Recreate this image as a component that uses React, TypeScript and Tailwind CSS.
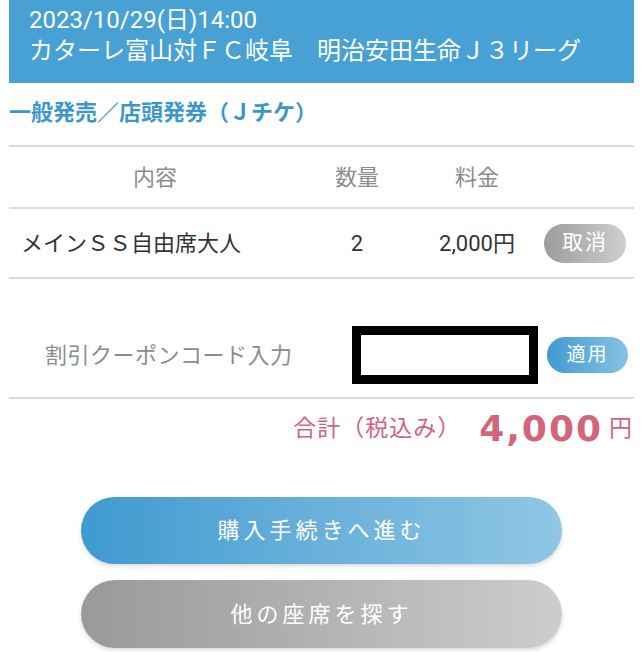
import React from "react";

const font = { fontFamily: "Roboto, 'Noto Sans CJK JP', sans-serif" };

export default function App() {
  return (
    <div
      className="w-[643px] h-[652px] bg-white overflow-hidden px-[9px] font-['Roboto','Noto_Sans_CJK_JP',sans-serif]"
      style={font}
    >
      {/* Event header */}
      <div className="bg-[#48a1d4] text-white pl-[20px] pt-[5px] pb-[16px] text-[24px] leading-[31px]">
        <p>2023/10/29(日)14:00</p>
        <p>カターレ富山対ＦＣ岐阜　明治安田生命Ｊ３リーグ</p>
      </div>

      <h2 className="text-[#3b97cb] font-bold text-[22px] leading-[30px] mt-[15px] mb-[17px]">
        一般発売／店頭発券（Ｊチケ）
      </h2>

      {/* Ticket table */}
      <div className="border-t-2 border-[#dcdcdc]">
        <div className="grid grid-cols-[292px_112px_128px_1fr] items-center h-[62px] text-[22px] text-[#8c8c8c] border-b-2 border-[#dcdcdc]">
          <span className="text-center">内容</span>
          <span className="text-center">数量</span>
          <span className="text-center">料金</span>
          <span />
        </div>
        <div className="grid grid-cols-[292px_112px_128px_1fr] items-center h-[70px] text-[22px] text-[#333] border-b-2 border-[#dcdcdc]">
          <span className="pl-[12px]">メインＳＳ自由席大人</span>
          <span className="text-center">2</span>
          <span className="text-center">2,000円</span>
          <div className="flex justify-end pr-[8px]">
            <button className="w-[82px] h-[39px] rounded-full bg-gradient-to-r from-[#9c9c9c] to-[#cfcfcf] text-white text-[21px] tracking-[2px]">
              取消
            </button>
          </div>
        </div>
      </div>

      {/* Coupon */}
      <div className="flex items-center h-[120px] pt-[34px] border-b-2 border-[#dcdcdc]">
        <span className="w-[343px] text-[22px] text-[#8c8c8c] pl-[36px] tracking-[0.5px]">
          割引クーポンコード入力
        </span>
        <div className="w-[186px] h-[58px] border-[9px] border-black bg-white" />
        <button className="ml-[9px] w-[81px] h-[36px] rounded-full bg-gradient-to-r from-[#3f9ad0] to-[#86c3e5] text-white text-[19px] tracking-[2px]">
          適用
        </button>
      </div>

      {/* Total */}
      <div className="flex items-center justify-end pr-[2px] h-[60px] text-[#d2647c]">
        <span className="text-[23px] tracking-[1px]">合計（税込み）</span>
        <span className="ml-[18px] text-[36px] leading-[40px] font-bold tracking-[2px] font-['DejaVu_Sans',sans-serif]">
          4,000
        </span>
        <span className="ml-[6px] text-[23px]">円</span>
      </div>

      {/* Actions */}
      <div className="flex flex-col items-center gap-[16px] mt-[38px]">
        <button className="w-[481px] h-[67px] rounded-full bg-gradient-to-r from-[#3e9ad0] to-[#8fc7e4] text-white text-[22px] tracking-[4px] shadow-[0_2px_4px_rgba(0,0,0,0.15)]">
          購入手続きへ進む
        </button>
        <button className="w-[481px] h-[68px] rounded-full bg-gradient-to-r from-[#999999] to-[#cdcdcd] text-white text-[22px] tracking-[4px] shadow-[0_2px_4px_rgba(0,0,0,0.15)]">
          他の座席を探す
        </button>
      </div>
    </div>
  );
}
